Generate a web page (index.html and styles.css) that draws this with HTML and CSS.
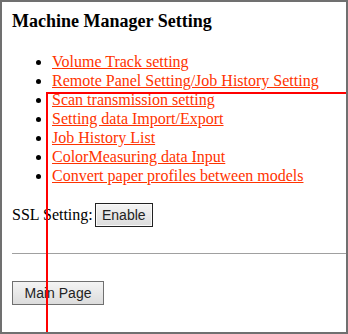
FILE: index.html
```html
<!DOCTYPE html>
<html lang="en">
<head>
    <meta charset="UTF-8">
    <title>Machine Manager Setting</title>
    <link rel="stylesheet" href="styles.css">
</head>
<body>
    <div class="frame">
        <h3 class="title">Machine Manager Setting</h3>

        <ul class="menu">
            <li><a href="#">Volume Track setting</a></li>
            <li><a href="#">Remote Panel Setting/Job History Setting</a></li>
            <li><a href="#">Scan transmission setting</a></li>
            <li><a href="#">Setting data Import/Export</a></li>
            <li><a href="#">Job History List</a></li>
            <li><a href="#">ColorMeasuring data Input</a></li>
            <li><a href="#">Convert paper profiles between models</a></li>
        </ul>

        <div class="ssl-row">
            <span>SSL Setting:</span>
            <button class="btn btn-dark">Enable</button>
        </div>

        <hr class="divider">

        <button class="btn btn-main">Main Page</button>

        <div class="highlight"></div>
    </div>
</body>
</html>
```

FILE: styles.css
```css
* {
    box-sizing: border-box;
}

body {
    margin: 0;
    background: #fff;
    font-family: "Liberation Serif", "Times New Roman", serif;
}

.frame {
    position: relative;
    width: 348px;
    height: 334px;
    border: 2px solid #707070;
    padding: 9px 0 0 10px;
    overflow: hidden;
}

.title {
    margin: 0;
    font-size: 18px;
    line-height: 20px;
    font-weight: bold;
    color: #000;
}

.menu {
    margin: 21px 0 0 0;
    padding-left: 40px;
    font-size: 16px;
    line-height: 19px;
}

.menu a {
    color: #ff3300;
}

.ssl-row {
    display: flex;
    align-items: center;
    gap: 2px;
    margin-top: 18px;
    font-size: 16px;
}

.btn {
    font-family: "Liberation Sans", Arial, sans-serif;
    font-size: 14px;
    height: 24px;
    padding: 0;
    color: #222;
    background: linear-gradient(#f4f4f4, #dcdcdc);
}

.btn-dark {
    width: 58px;
    border: 1px solid #222;
    box-shadow: inset 0 0 0 1px #fafafa;
}

.btn-main {
    width: 92px;
    border: 1px solid #707070;
}

.divider {
    margin: 26px 0 0 0;
    border: 0;
    border-top: 1px solid #a0a0a0;
    height: 1px;
    margin-bottom: 27px;
}

/* red annotation box over the page */
.highlight {
    position: absolute;
    left: 44px;
    top: 90px;
    width: 330px;
    height: 300px;
    border: 2px solid #ff0000;
}
```
